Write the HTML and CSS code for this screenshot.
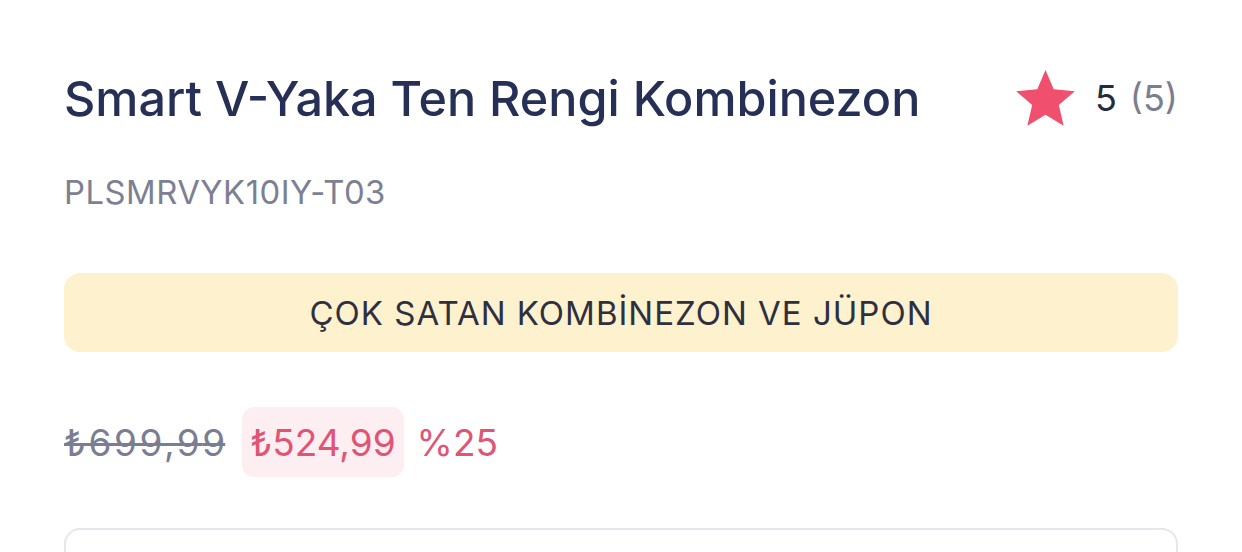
FILE: index.html
```html
<!DOCTYPE html>
<html lang="tr">
<head>
<meta charset="utf-8">
<link rel="stylesheet" href="styles.css">
</head>
<body>
<main class="page">
  <header class="head">
    <h1 class="title">Smart V-Yaka Ten Rengi Kombinezon</h1>
    <div class="rating">
      <svg class="star" viewBox="0 0 24 24" width="67" height="64"><path d="M12 1.5l3.09 7.26 7.91.7-6 5.2 1.8 7.74L12 18.3l-6.8 4.1 1.8-7.74-6-5.2 7.91-.7z" fill="#f0506e"/></svg>
      <span class="score">5</span>
      <span class="count">(5)</span>
    </div>
  </header>
  <div class="sku">PLSMRVYK10IY-T03</div>
  <div class="banner">ÇOK SATAN KOMBİNEZON VE JÜPON</div>
  <div class="prices">
    <span class="old">₺699,9<span class="last">9</span></span>
    <span class="new">₺524,99</span>
    <span class="disc">%25</span>
  </div>
  <div class="box"></div>
</main>
</body>
</html>
```
FILE: styles.css
```css
* { box-sizing: border-box; margin: 0; padding: 0; }
html, body { background: #fff; }
body { font-family: "Inter", "Noto Sans", sans-serif; overflow: hidden; height: 552px; }
.page { padding: 64px 64px 0 64px; width: 1242px; height: 552px; overflow: hidden; }
.head { display: flex; align-items: center; justify-content: space-between; height: 68px; }
.title { font-size: 48.5px; font-weight: 500; color: #263056; letter-spacing: 0; }
.rating { display: flex; align-items: center; }
.star { margin-right: 16px; }
.score { font-size: 36px; color: #272b3c; margin-right: 13px; }
.count { font-size: 36px; color: #7c7e90; }
.sku { margin-top: 40px; font-size: 32.8px; color: #7d7f93; letter-spacing: 0.5px; }
.banner { margin-top: 61px; height: 79px; border-radius: 16px; background: #fef1cd; display: flex; align-items: center; justify-content: center; font-size: 33px; color: #2e3040; letter-spacing: 1px; }
.prices { margin-top: 55px; display: flex; align-items: center; height: 70px; }
.old { font-size: 37px; color: #7b7d92; text-decoration: line-through; text-decoration-thickness: 3px; letter-spacing: 2.5px; margin-right: 17px; }
.old .last { letter-spacing: 0; }
.new { font-size: 37px; color: #e05475; background: #fdeef1; border-radius: 12px; height: 70px; padding: 0 8px; display: flex; align-items: center; margin-right: 13px; }
.disc { font-size: 37px; color: #e05475; }
.box { margin-top: 51px; height: 60px; border: 2px solid #e5e6ee; border-radius: 16px; }
```
